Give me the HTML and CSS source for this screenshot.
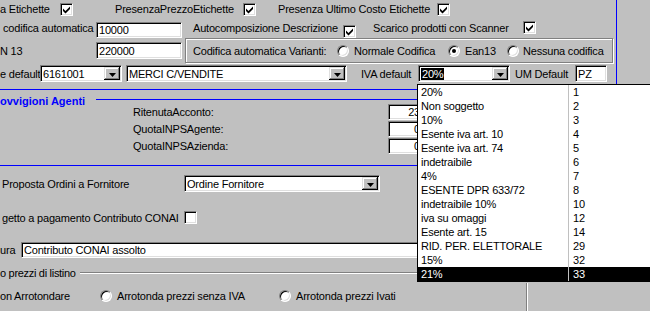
FILE: index.html
```html
<!DOCTYPE html>
<html lang="it">
<head>
<meta charset="utf-8">
<title>Parametri</title>
<link rel="stylesheet" href="styles.css">
</head>
<body>
<div class="screen">
  <div class="top">
    <div class="row r1">
      <span class="lbl w-etich">a Etichette</span>
      <span class="chk on c-etich"><svg viewBox="0 0 13 13"><path d="M3 5.5 L5.5 8 L10 3.5 L10 6 L5.5 10.5 L3 8 Z"/></svg></span>
      <span class="lbl w-ppe">PresenzaPrezzoEtichette</span>
      <span class="chk on c-ppe"><svg viewBox="0 0 13 13"><path d="M3 5.5 L5.5 8 L10 3.5 L10 6 L5.5 10.5 L3 8 Z"/></svg></span>
      <span class="lbl w-puc">Presenza Ultimo Costo Etichette</span>
      <span class="chk on"><svg viewBox="0 0 13 13"><path d="M3 5.5 L5.5 8 L10 3.5 L10 6 L5.5 10.5 L3 8 Z"/></svg></span>
    </div>
    <div class="row r2">
      <span class="lbl w-cod">codifica automatica</span>
      <span class="field f-cod">10000</span>
      <span class="lbl w-auto">Autocomposizione Descrizione</span>
      <span class="chk on c-auto"><svg viewBox="0 0 13 13"><path d="M3 5.5 L5.5 8 L10 3.5 L10 6 L5.5 10.5 L3 8 Z"/></svg></span>
      <span class="lbl w-scan">Scarico prodotti con Scanner</span>
      <span class="chk on c-scan"><svg viewBox="0 0 13 13"><path d="M3 5.5 L5.5 8 L10 3.5 L10 6 L5.5 10.5 L3 8 Z"/></svg></span>
    </div>
    <div class="row r3">
      <span class="lbl w-ean">N 13</span>
      <span class="field f-ean">220000</span>
      <div class="group">
        <span class="lbl w-var">Codifica automatica Varianti:</span>
        <span class="radio"></span>
        <span class="lbl w-norm">Normale Codifica</span>
        <span class="radio checked"></span>
        <span class="lbl w-e13">Ean13</span>
        <span class="radio"></span>
        <span class="lbl w-ness">Nessuna codifica</span>
      </div>
    </div>
    <div class="row r4">
      <span class="lbl w-edef">e default</span>
      <div class="combo cb-code"><span class="val">6161001</span><span class="btn"><svg viewBox="0 0 7 4"><path d="M0 0 H7 L3.5 4 Z"/></svg></span></div>
      <div class="combo cb-desc"><span class="val">MERCI C/VENDITE</span><span class="btn"><svg viewBox="0 0 7 4"><path d="M0 0 H7 L3.5 4 Z"/></svg></span></div>
      <span class="lbl w-iva">IVA default</span>
      <div class="combo cb-iva"><span class="val"><span class="sel">20%</span></span><span class="btn"><svg viewBox="0 0 7 4"><path d="M0 0 H7 L3.5 4 Z"/></svg></span></div>
      <span class="lbl w-um">UM Default</span>
      <span class="field f-um">PZ</span>
    </div>
  </div>

  <div class="prov">
    <div class="prov-head">
      <span class="prov-title">ovvigioni Agenti</span>
      <span class="prov-line"></span>
    </div>
    <div class="prov-rows">
      <div class="row prow"><span class="lbl w-plbl">RitenutaAcconto:</span><span class="field f-num">23</span></div>
      <div class="row prow"><span class="lbl w-plbl">QuotaINPSAgente:</span><span class="field f-num">0</span></div>
      <div class="row prow"><span class="lbl w-plbl">QuotaINPSAzienda:</span><span class="field f-num">0</span></div>
    </div>
  </div>

  <div class="lower">
    <div class="row r-ord">
      <span class="lbl w-ord">Proposta Ordini a Fornitore</span>
      <div class="combo cb-ord"><span class="val">Ordine Fornitore</span><span class="btn"><svg viewBox="0 0 7 4"><path d="M0 0 H7 L3.5 4 Z"/></svg></span></div>
    </div>
    <div class="row r-conai">
      <span class="lbl w-ord">getto a pagamento Contributo CONAI</span>
      <span class="chk"></span>
    </div>
    <div class="row r-ura">
      <span class="lbl w-ura">ura</span>
      <span class="field f-ura">Contributo CONAI assolto</span>
    </div>
    <div class="row r-grp">
      <span class="lbl grp-title">o prezzi di listino</span>
      <span class="etch"></span>
    </div>
    <div class="row r-rad">
      <span class="lbl w-nonarr">on Arrotondare</span>
      <span class="radio"></span>
      <span class="lbl w-senza">Arrotonda prezzi senza IVA</span>
      <span class="radio"></span>
      <span class="lbl w-ivati">Arrotonda prezzi Ivati</span>
      <span class="vdiv"></span>
    </div>
  </div>

  <div class="droplist">
    <div class="opt"><span class="c1">20%</span><span class="c2">1</span></div>
    <div class="opt"><span class="c1">Non soggetto</span><span class="c2">2</span></div>
    <div class="opt"><span class="c1">10%</span><span class="c2">3</span></div>
    <div class="opt"><span class="c1">Esente iva art. 10</span><span class="c2">4</span></div>
    <div class="opt"><span class="c1">Esente iva art. 74</span><span class="c2">5</span></div>
    <div class="opt"><span class="c1">indetraibile</span><span class="c2">6</span></div>
    <div class="opt"><span class="c1">4%</span><span class="c2">7</span></div>
    <div class="opt"><span class="c1">ESENTE DPR 633/72</span><span class="c2">8</span></div>
    <div class="opt"><span class="c1">indetraibile 10%</span><span class="c2">10</span></div>
    <div class="opt"><span class="c1">iva su omaggi</span><span class="c2">12</span></div>
    <div class="opt"><span class="c1">Esente art. 15</span><span class="c2">14</span></div>
    <div class="opt"><span class="c1">RID. PER. ELETTORALE</span><span class="c2">29</span></div>
    <div class="opt"><span class="c1">15%</span><span class="c2">32</span></div>
    <div class="opt active"><span class="c1">21%</span><span class="c2">33</span></div>
  </div>
</div>
</body>
</html>
```

FILE: styles.css
```css
* { box-sizing: border-box; }
html, body { margin: 0; padding: 0; }
body {
  background: #c0c0c0;
  font-family: "Liberation Sans", Arial, sans-serif;
  font-size: 11px;
  letter-spacing: -0.2px;
  color: #000;
}
.screen {
  width: 650px;
  height: 311px;
  position: relative;
  overflow: hidden;
  background: #c0c0c0;
}
.row { display: flex; align-items: center; white-space: nowrap; }
.lbl { flex: none; white-space: nowrap; }

/* sunken controls */
.field, .combo, .chk {
  flex: none;
  background: #fff;
  border-top: 1px solid #808080;
  border-left: 1px solid #808080;
  border-bottom: 1px solid #fff;
  border-right: 1px solid #fff;
  box-shadow: inset 1px 1px 0 #000, inset -1px -1px 0 #dfdfdf;
}
.field {
  display: flex;
  align-items: center;
  padding: 0 3px 0 2px;
  overflow: hidden;
  white-space: nowrap;
}
.chk { width: 13px; height: 13px; display: block; }
.chk svg { display: block; width: 13px; height: 13px; margin: -1px 0 0 -1px; }
.chk svg path { fill: #000; }

.radio {
  flex: none;
  width: 12px;
  height: 12px;
  border-radius: 50%;
  background: #fff;
  border: 1px solid;
  border-color: #808080 #fff #fff #808080;
  box-shadow: inset 1px 1px 0 #000, inset -1px -1px 0 #dfdfdf;
  position: relative;
}
.radio.checked::after {
  content: "";
  position: absolute;
  left: 3px;
  top: 3px;
  width: 4px;
  height: 4px;
  border-radius: 50%;
  background: #000;
}

.combo {
  display: flex;
  align-items: center;
  height: 17px;
  padding: 1px 1px 1px 2px;
}
.combo .val { flex: 1; overflow: hidden; white-space: nowrap; }
.combo .sel { background: #000; color: #fff; padding: 0 1px; }
.btn {
  flex: none;
  width: 16px;
  height: 13px;
  background: #c0c0c0;
  box-shadow: inset -1px -1px 0 #000, inset 1px 1px 0 #dfdfdf, inset -2px -2px 0 #808080, inset 2px 2px 0 #fff;
  display: flex;
  align-items: center;
  justify-content: center;
  padding-top: 2px;
}
.btn svg { width: 7px; height: 4px; display: block; }
.btn svg path { fill: #000; }

/* top block */
.top {
  width: 617px;
  border-right: 1px solid #0000ff;
  border-bottom: 1px solid #0000ff;
  padding-bottom: 5px;
}
.r1 { height: 18px; }
.r2 { height: 20px; }
.r3 { height: 25px; }
.r4 { height: 21px; }

.w-etich { width: 60px; }
.c-etich { margin-right: 42px; }
.w-ppe { width: 128px; }
.c-ppe { margin-right: 22px; }
.w-puc { width: 159px; }

.w-cod { width: 96px; padding-left: 3px; }
.f-cod { width: 86px; height: 16px; align-self: flex-start; margin-top: 4px; }
.w-auto { width: 150px; margin-left: 11px; }
.c-auto { align-self: flex-start; margin-top: 7px; margin-right: 17px; }
.w-scan { width: 150px; }
.c-scan { align-self: flex-start; margin-top: 3px; }

.w-ean { width: 96px; }
.f-ean { width: 86px; height: 17px; }
.group {
  flex: none;
  margin-left: 3px;
  width: 428px;
  height: 25px;
  border: 1px solid #808080;
  box-shadow: inset 1px 1px 0 #fff, 1px 1px 0 #fff;
  display: flex;
  align-items: center;
  padding-left: 7px;
  white-space: nowrap;
}
.w-var { width: 144px; }
.w-norm { margin-left: 5px; width: 94px; }
.w-e13 { margin-left: 5px; width: 42px; }
.w-ness { margin-left: 4px; }

.w-edef { width: 40px; }
.cb-code { width: 82px; }
.cb-desc { margin-left: 4px; width: 221px; }
.w-iva { margin-left: 14px; width: 57px; }
.cb-iva { width: 92px; }
.w-um { margin-left: 5px; width: 60px; }
.f-um { width: 32px; height: 17px; }

/* provvigioni */
.prov {
  border-bottom: 1px solid #0000ff;
  padding-bottom: 11px;
}
.prov-head { display: flex; align-items: flex-start; height: 13px; }
.prov-title {
  width: 96px;
  flex: none;
  margin-top: 5px;
  line-height: 13px;
  color: #0000ff;
  font-weight: bold;
  letter-spacing: 0;
}
.prov-line { flex: 1; height: 10px; border-bottom: 1px solid #0000ff; }
.prov-rows { margin-left: 133px; }
.prow { height: 17px; }
.w-plbl { width: 255px; }
.f-num { width: 36px; height: 16px; justify-content: flex-end; }

/* lower block */
.r-ord { height: 17px; margin-top: 9px; }
.w-ord { width: 184px; padding-left: 2px; }
.cb-ord { width: 196px; }
.r-conai { height: 13px; margin-top: 19px; }
.r-ura { height: 16px; margin-top: 18px; }
.w-ura { width: 21px; }
.f-ura { width: 640px; height: 16px; }
.r-grp { height: 14px; margin-top: 8px; }
.grp-title { padding-right: 4px; letter-spacing: -0.3px; }
.etch { flex: 1; height: 2px; border-top: 1px solid #808080; border-bottom: 1px solid #fff; }
.r-rad { height: 31px; }
.w-nonarr { width: 100px; }
.w-senza { margin-left: 5px; width: 162px; }
.w-ivati { margin-left: 5px; width: 230px; }
.vdiv {
  align-self: stretch;
  margin-top: 3px;
  width: 2px;
  border-left: 1px solid #808080;
  border-right: 1px solid #fff;
}

/* open dropdown list */
.droplist {
  position: absolute;
  left: 417px;
  top: 84px;
  width: 240px;
  height: 198px;
  background: #fff;
  border: 1px solid #000;
}
.opt { display: flex; height: 14px; line-height: 14px; white-space: nowrap; }
.opt .c1 { width: 151px; padding-left: 3px; border-right: 1px solid #c0c0c0; flex: none; }
.opt .c2 { padding-left: 4px; }
.opt.active { background: #000; color: #fff; }
```
